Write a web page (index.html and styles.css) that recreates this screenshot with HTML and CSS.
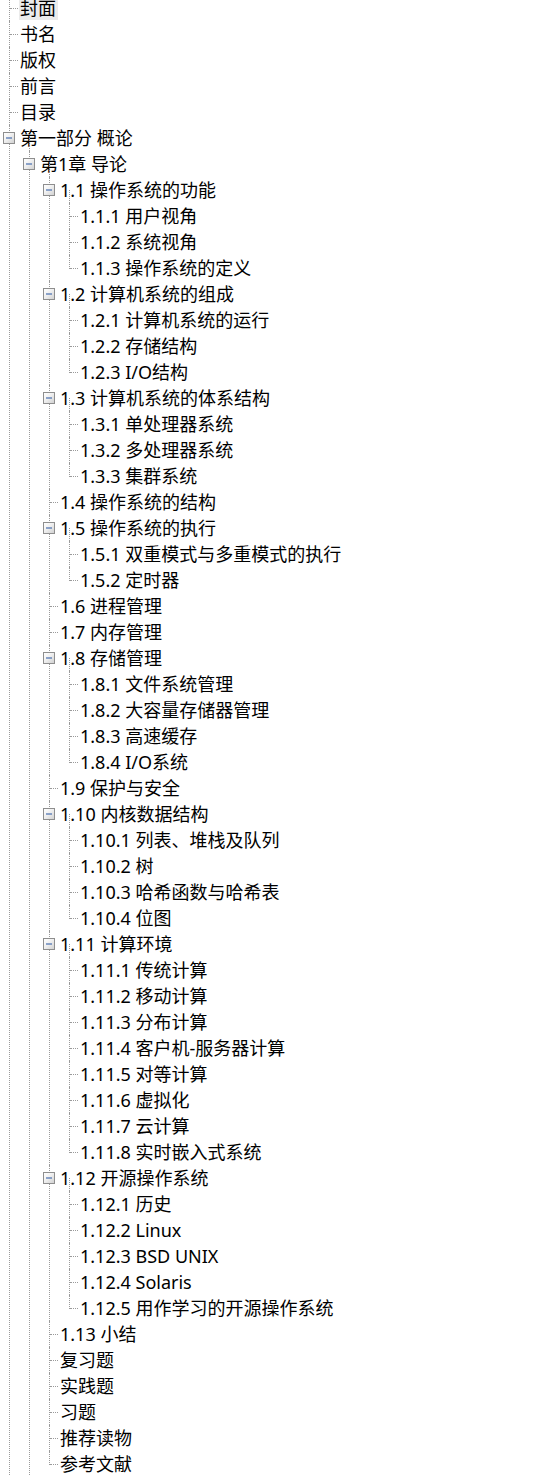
FILE: index.html
```html
<!DOCTYPE html>
<html lang="zh-CN">
<head>
<meta charset="utf-8">
<title>目录</title>
<link rel="stylesheet" href="styles.css">
</head>
<body>
<ul class="tree root">
  <li class="node"><span class="label sel">封面</span></li>
  <li class="node"><span class="label">书名</span></li>
  <li class="node"><span class="label">版权</span></li>
  <li class="node"><span class="label">前言</span></li>
  <li class="node"><span class="label">目录</span></li>
  <li class="node open"><span class="toggle"></span><span class="label">第一部分 概论</span>
    <ul class="tree">
      <li class="node open"><span class="toggle"></span><span class="label">第1章 导论</span>
        <ul class="tree">
          <li class="node open"><span class="toggle"></span><span class="label">1.1 操作系统的功能</span>
            <ul class="tree">
              <li class="node"><span class="label">1.1.1 用户视角</span></li>
              <li class="node"><span class="label">1.1.2 系统视角</span></li>
              <li class="node last"><span class="label">1.1.3 操作系统的定义</span></li>
            </ul>
          </li>
          <li class="node open"><span class="toggle"></span><span class="label">1.2 计算机系统的组成</span>
            <ul class="tree">
              <li class="node"><span class="label">1.2.1 计算机系统的运行</span></li>
              <li class="node"><span class="label">1.2.2 存储结构</span></li>
              <li class="node last"><span class="label">1.2.3 I/O结构</span></li>
            </ul>
          </li>
          <li class="node open"><span class="toggle"></span><span class="label">1.3 计算机系统的体系结构</span>
            <ul class="tree">
              <li class="node"><span class="label">1.3.1 单处理器系统</span></li>
              <li class="node"><span class="label">1.3.2 多处理器系统</span></li>
              <li class="node last"><span class="label">1.3.3 集群系统</span></li>
            </ul>
          </li>
          <li class="node"><span class="label">1.4 操作系统的结构</span></li>
          <li class="node open"><span class="toggle"></span><span class="label">1.5 操作系统的执行</span>
            <ul class="tree">
              <li class="node"><span class="label">1.5.1 双重模式与多重模式的执行</span></li>
              <li class="node last"><span class="label">1.5.2 定时器</span></li>
            </ul>
          </li>
          <li class="node"><span class="label">1.6 进程管理</span></li>
          <li class="node"><span class="label">1.7 内存管理</span></li>
          <li class="node open"><span class="toggle"></span><span class="label">1.8 存储管理</span>
            <ul class="tree">
              <li class="node"><span class="label">1.8.1 文件系统管理</span></li>
              <li class="node"><span class="label">1.8.2 大容量存储器管理</span></li>
              <li class="node"><span class="label">1.8.3 高速缓存</span></li>
              <li class="node last"><span class="label">1.8.4 I/O系统</span></li>
            </ul>
          </li>
          <li class="node"><span class="label">1.9 保护与安全</span></li>
          <li class="node open"><span class="toggle"></span><span class="label">1.10 内核数据结构</span>
            <ul class="tree">
              <li class="node"><span class="label">1.10.1 列表、堆栈及队列</span></li>
              <li class="node"><span class="label">1.10.2 树</span></li>
              <li class="node"><span class="label">1.10.3 哈希函数与哈希表</span></li>
              <li class="node last"><span class="label">1.10.4 位图</span></li>
            </ul>
          </li>
          <li class="node open"><span class="toggle"></span><span class="label">1.11 计算环境</span>
            <ul class="tree">
              <li class="node"><span class="label">1.11.1 传统计算</span></li>
              <li class="node"><span class="label">1.11.2 移动计算</span></li>
              <li class="node"><span class="label">1.11.3 分布计算</span></li>
              <li class="node"><span class="label">1.11.4 客户机-服务器计算</span></li>
              <li class="node"><span class="label">1.11.5 对等计算</span></li>
              <li class="node"><span class="label">1.11.6 虚拟化</span></li>
              <li class="node"><span class="label">1.11.7 云计算</span></li>
              <li class="node last"><span class="label">1.11.8 实时嵌入式系统</span></li>
            </ul>
          </li>
          <li class="node open"><span class="toggle"></span><span class="label">1.12 开源操作系统</span>
            <ul class="tree">
              <li class="node"><span class="label">1.12.1 历史</span></li>
              <li class="node"><span class="label">1.12.2 Linux</span></li>
              <li class="node"><span class="label">1.12.3 BSD UNIX</span></li>
              <li class="node"><span class="label">1.12.4 Solaris</span></li>
              <li class="node last"><span class="label">1.12.5 用作学习的开源操作系统</span></li>
            </ul>
          </li>
          <li class="node"><span class="label">1.13 小结</span></li>
          <li class="node"><span class="label">复习题</span></li>
          <li class="node"><span class="label">实践题</span></li>
          <li class="node"><span class="label">习题</span></li>
          <li class="node"><span class="label">推荐读物</span></li>
          <li class="node last"><span class="label">参考文献</span></li>
        </ul>
      </li>
    </ul>
  </li>
</ul>
</body>
</html>
```
FILE: styles.css
```css
html, body {
  margin: 0;
  padding: 0;
  background: #ffffff;
  overflow: hidden;
}

body {
  font-family: "Noto Sans", "Noto Sans CJK SC", sans-serif;
  font-size: 18px;
  color: #000000;
}

.tree {
  list-style: none;
  margin: 0;
  padding: 0;
  position: relative;
}

.root {
  margin-top: -5px;
}

.node {
  position: relative;
  padding-left: 20px;
}

/* vertical connector */
.node::before {
  content: "";
  position: absolute;
  left: 9px;
  top: 0;
  bottom: 0;
  border-left: 1px dotted #9a9a9a;
}

.node.last::before {
  bottom: auto;
  height: 14px;
}

/* horizontal connector */
.node::after {
  content: "";
  position: absolute;
  left: 10px;
  top: 13px;
  width: 8px;
  border-top: 1px dotted #9a9a9a;
}

.node.open::after {
  display: none;
}

/* line from an expanded box down to its children */
.node.open > .tree::before {
  content: "";
  position: absolute;
  left: 9px;
  top: -13px;
  height: 13px;
  border-left: 1px dotted #9a9a9a;
}

.label {
  display: inline-block;
  height: 24px;
  line-height: 24px;
  margin: 1px 0 1px -1px;
  padding: 0 2px 0 1px;
  white-space: nowrap;
  vertical-align: top;
}

.label.sel {
  background: #ebebeb;
}

.toggle {
  position: absolute;
  z-index: 1;
  left: 3px;
  top: 7px;
  width: 10px;
  height: 10px;
  border: 1px solid #8e8e8e;
  background: linear-gradient(135deg, #ffffff 0%, #f0f0f0 45%, #d2d2d2 100%);
}

.toggle::before {
  content: "";
  position: absolute;
  left: 2px;
  top: 4px;
  width: 6px;
  height: 2px;
  background: #4a6fb0;
  transform: scaleY(0.6);
}
```
